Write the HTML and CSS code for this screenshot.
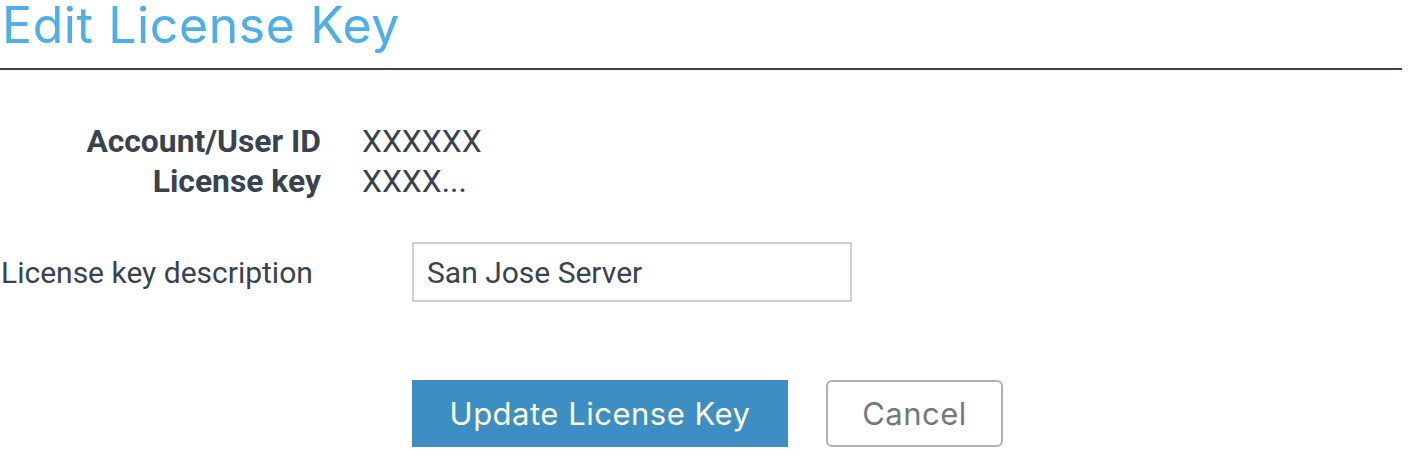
FILE: index.html
```html
<!DOCTYPE html>
<html>
<head>
<meta charset="utf-8">
<link rel="stylesheet" href="styles.css">
</head>
<body>
<div class="page">
  <h1 class="title">Edit License Key</h1>
  <div class="rule"></div>
  <div class="info">
    <div class="info-label">Account/User ID</div>
    <div class="info-value">XXXXXX</div>
    <div class="info-label">License key</div>
    <div class="info-value">XXXX...</div>
  </div>
  <div class="field">
    <label class="field-label" for="desc">License key description</label>
    <input class="field-input" id="desc" type="text" value="San Jose Server">
  </div>
  <div class="actions">
    <button class="btn btn-primary">Update License Key</button>
    <button class="btn btn-cancel">Cancel</button>
  </div>
</div>
</body>
</html>
```
FILE: styles.css
```css
* { box-sizing: border-box; }
html, body { margin: 0; padding: 0; background: #fff; }
.page {
  width: 1402px;
  font-family: Roboto, "Liberation Sans", sans-serif;
  color: #37434f;
}
.title {
  margin: 0;
  padding: 0 0 0 2px;
  height: 68px;
  font-family: Inter, "DejaVu Sans", sans-serif;
  font-weight: 400;
  font-size: 50px;
  line-height: 50px;
  letter-spacing: 0.6px;
  color: #4daeea;
}
.rule {
  height: 2px;
  background: #37434f;
}
.info {
  display: grid;
  grid-template-columns: 321px auto;
  column-gap: 41px;
  margin-top: 51px;
  font-size: 31.8px;
  line-height: 40px;
}
.info-label {
  text-align: right;
  font-weight: 700;
}
.info-value { font-weight: 400; }
.field {
  display: flex;
  align-items: center;
  margin-top: 41px;
}
.field-label {
  width: 412px;
  padding-left: 1px;
  font-size: 30px;
}
.field-input {
  width: 440px;
  height: 60px;
  border: 2px solid #cfcfcf;
  padding: 0 13px;
  font-family: Roboto, "Liberation Sans", sans-serif;
  font-size: 30px;
  color: #37434f;
  outline: none;
}
.actions {
  display: flex;
  gap: 38px;
  margin-top: 78px;
  padding-left: 412px;
}
.btn {
  height: 67px;
  font-family: Inter, "DejaVu Sans", sans-serif;
  font-size: 31px;
  letter-spacing: 0.5px;
  cursor: pointer;
}
.btn-primary {
  width: 376px;
  background: #3d8fc3;
  color: #fffbe0;
  border: none;
  border-radius: 0;
}
.btn-cancel {
  width: 177px;
  background: #fff;
  color: #777;
  border: 2px solid #b0b0b0;
  border-radius: 6px;
}
```
